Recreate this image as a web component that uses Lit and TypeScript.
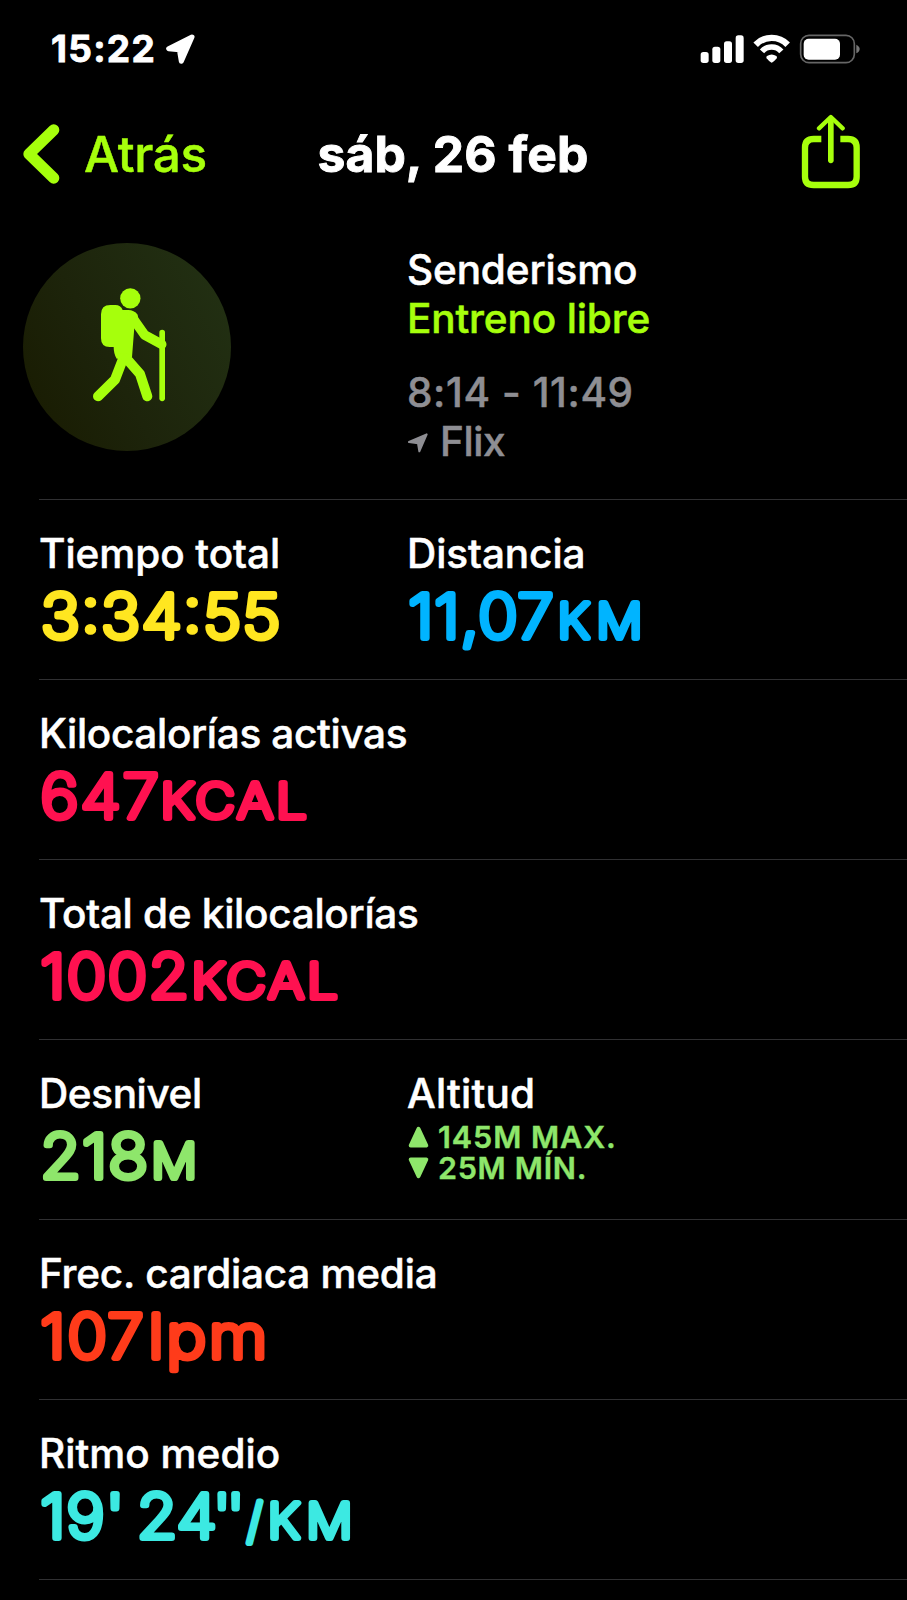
import { LitElement, html, svg, css, nothing } from "lit";
import { customElement, property } from "lit/decorators.js";

/** A run of rounded display text: text, font size, left edge, tracking, horizontal stretch. */
type Run = [string, number, number, number, number];

interface Metric {
  label: string;
  track: number;
  tone: string;
  runs?: Run[];
  range?: { up: boolean; text: string; cls: string }[];
}

const ROWS: Metric[][] = [
  [
    { label: "Tiempo total", track: -0.05, tone: "yellow", runs: [["3:34:55", 60.8, 2, 1.7, 1.07]] },
    {
      label: "Distancia", track: -0.08, tone: "blue",
      runs: [["11,07", 60.8, 1.6, 1.2, 1.07], ["KM", 47.6, 150.8, 6.5, 1.07]],
    },
  ],
  [{
    label: "Kilocalorías activas", track: -0.33, tone: "pink",
    runs: [["647", 60.8, 1.5, 2.1, 1.07], ["KCAL", 47.6, 121.8, 3, 1.13]],
  }],
  [{
    label: "Total de kilocalorías", track: -0.28, tone: "pink",
    runs: [["1002", 60.8, 1.5, 1.5, 1.07], ["KCAL", 47.6, 152.8, 3, 1.13]],
  }],
  [
    {
      label: "Desnivel", track: -0.4, tone: "green",
      runs: [["218", 60.8, 1.4, 1.5, 1.07], ["M", 47.6, 112.6, 0, 1.06]],
    },
    {
      label: "Altitud", track: 0.23, tone: "green",
      range: [
        { up: true, text: "145M MAX.", cls: "max" },
        { up: false, text: "25M MÍN.", cls: "min" },
      ],
    },
  ],
  [{
    label: "Frec. cardiaca media", track: -0.23, tone: "red",
    runs: [["107", 60.8, 1.5, 2, 1.07], ["lpm", 60.8, 109.5, 2.7, 1.1]],
  }],
  [{
    label: "Ritmo medio", track: 0.02, tone: "cyan",
    runs: [
      ["19'", 60.8, 1.5, 1.2, 1.07], ["24", 60.8, 98, 0.6, 1.07], ["''", 60.8, 174.2, -3.34, 1],
      ["/", 47.6, 208, 0, 0.95], ["KM", 47.6, 228.9, 6.5, 1.07],
    ],
  }],
];

@customElement("workout-metric")
class WorkoutMetric extends LitElement {
  @property({ attribute: false }) metric!: Metric;

  static styles = css`
    :host { display: block; }
    .label {
      font-size: 40.5px; line-height: 49px; font-weight: 500; white-space: nowrap;
      -webkit-text-stroke: 0.5px currentColor;
    }
    .value { display: block; overflow: visible; }
    .value text {
      fill: currentColor; stroke: currentColor; stroke-width: 6; stroke-linejoin: round;
      font-family: Inter, sans-serif; font-weight: 200;
    }
    .yellow { color: #ffe620; }
    .blue { color: #00b4ff; }
    .pink { color: #ff1150; }
    .green { color: #8ee66b; }
    .red { color: #ff3b1a; }
    .cyan { color: #3ce9e2; }
    .range { padding-top: 3px; }
    .line {
      display: flex; align-items: center; gap: 9px; padding-left: 1px;
      font-size: 30.5px; line-height: 31px; font-weight: 600; white-space: nowrap;
      -webkit-text-stroke: 0.4px currentColor;
    }
    .line svg { flex: none; }
    .max { letter-spacing: 0.95px; }
    .min { letter-spacing: 0.7px; }
  `;

  render() {
    const m = this.metric;
    return html`
      <div class="label" style="letter-spacing:${m.track}px">${m.label}</div>
      ${m.runs
        ? html`<svg class="value ${m.tone}" width="330" height="80">
            ${m.runs.map(([text, size, x, track, stretch]) => svg`<text
              transform="translate(${x} 60.2) scale(${stretch} 1)" font-size=${size}
              dx=${["0", ...Array(text.length - 1).fill(track)].join(" ")}>${text}</text>`)}
          </svg>`
        : nothing}
      ${m.range
        ? html`<div class="range ${m.tone}">${m.range.map((r) => html`
            <div class="line ${r.cls}">
              <svg width="21" height="22" viewBox="0 0 21 22">
                <path d=${r.up ? "M10.5 2.800L18.300 19.500H2.700Z" : "M10.500 19.200L18.300 2.500H2.700Z"} fill="currentColor"
                  stroke="currentColor" stroke-width="4" stroke-linejoin="round"/>
              </svg>
              <span>${r.text}</span>
            </div>`)}</div>`
        : nothing}
    `;
  }
}

@customElement("app-root")
class AppRoot extends LitElement {
  static styles = css`
    :host {
      display: block; height: 1600px; overflow: hidden; background: #000; color: #fff;
      font-family: Inter, "Liberation Sans", sans-serif;
    }
    svg { display: block; flex: none; }
    .status {
      display: flex; align-items: center; height: 98px; box-sizing: border-box;
      padding: 0 45px 0 51px;
    }
    .clock {
      font-size: 37px; font-weight: 700; letter-spacing: 1.3px; line-height: 44px; width: 113px;
      -webkit-text-stroke: 0.8px currentColor;
    }
    .status .system { margin-left: auto; }
    .nav {
      display: grid; grid-template-columns: 1fr auto 1fr; align-items: center;
      height: 112px; padding: 0 46px 0 22px;
    }
    .back { display: flex; align-items: center; gap: 24px; color: #a6ff0c; }
    .back span {
      font-size: 49.5px; line-height: 60px; font-weight: 500; letter-spacing: -0.35px;
      -webkit-text-stroke: 0.5px currentColor;
    }
    .title {
      font-size: 49.8px; line-height: 60px; font-weight: 700; letter-spacing: 0.05px; padding-left: 23px;
      -webkit-text-stroke: 0.9px currentColor;
    }
    .share { justify-self: end; margin-bottom: 4px; }
    .summary { display: flex; height: 289px; box-sizing: border-box; padding: 33px 0 0 23px; }
    .badge {
      width: 208px; height: 208px; border-radius: 50%;
      background: linear-gradient(62deg, #191c02 8%, #1d240b 42%, #223013 92%);
    }
    .info {
      margin-left: 176px; padding-top: 2px; font-size: 40.5px; line-height: 49px; font-weight: 500;
      white-space: nowrap; letter-spacing: -0.15px; -webkit-text-stroke: 0.5px currentColor;
    }
    .kind { color: #a6ff0c; }
    .hours { color: #8e8e93; margin-top: 25px; letter-spacing: 0.6px; }
    .place { color: #8e8e93; display: flex; align-items: center; letter-spacing: -0.43px; gap: 11px; }
    .place svg { margin-top: 3px; }
    .rows { padding-left: 39px; }
    .row {
      display: grid; grid-template-columns: 368px 1fr; height: 180px; box-sizing: border-box;
      border-top: 1px solid #303032; padding-top: 29px;
    }
    .row:last-child { height: 181px; border-bottom: 1px solid #303032; }
  `;

  render() {
    return html`
      <div class="status">
        <div class="clock">15:22</div>
        <svg width="34" height="34" viewBox="0 0 102 102">
          <path d="M84 15L14 50L46 53L52 88Z" fill="#fff" stroke="#fff" stroke-width="15" stroke-linejoin="round"/>
        </svg>
        <svg class="system" width="162" height="30" viewBox="750 100 486 90">
          <g fill="#fff">
            <rect x="752" y="154" width="24" height="33" rx="8"/>
            <rect x="787" y="138" width="24" height="49" rx="8"/>
            <rect x="822" y="122" width="24" height="65" rx="8"/>
            <rect x="857" y="104" width="24" height="83" rx="8"/>
            <path d="M965 186Q961 186 950 173Q947 169 951 166Q965 157 979 166Q983 169 980 173Q969 186 965 186Z"/>
          </g>
          <g fill="none" stroke="#fff">
            <path d="M917 132A67 67 0 0 1 1013 132" stroke-width="19"/>
            <path d="M936 152A39 39 0 0 1 994 152" stroke-width="17"/>
          </g>
          <rect x="1052" y="104" width="161" height="82" rx="25" fill="none" stroke="#666" stroke-width="5"/>
          <rect x="1061" y="114" width="109" height="63" rx="15" fill="#fff"/>
          <path d="M1219 132Q1229 137 1229 145Q1229 153 1219 158Z" fill="#777"/>
        </svg>
      </div>
      <div class="nav">
        <div class="back">
          <svg width="38" height="60" viewBox="66 373 114 180">
            <path d="M161 391L87 463L161 535" fill="none" stroke="currentColor" stroke-width="34"
              stroke-linecap="round" stroke-linejoin="round"/>
          </svg>
          <span>Atrás</span>
        </div>
        <div class="title">sáb, 26 feb</div>
        <svg class="share" width="60" height="76" viewBox="1054 341 180 228" fill="none" stroke="#a6ff0c">
          <path d="M1115 416H1092Q1066 416 1066 442V529Q1066 554 1092 554H1195Q1221 554 1221 529V442Q1221 416 1195 416H1172" stroke-width="19"/>
          <path d="M1143.5 356V480" stroke-width="17" stroke-linecap="round"/>
          <path d="M1108 384L1143.5 350L1179 384" stroke-width="13" stroke-linecap="round" stroke-linejoin="round"/>
        </svg>
      </div>
      <div class="summary">
        <div class="badge">
          <svg width="208" height="208" viewBox="69 69 624 624" fill="#a6ff0c" stroke="#a6ff0c" stroke-linejoin="round" stroke-linecap="round">
            <circle cx="391" cy="235" r="30.5" stroke="none"/>
            <path stroke="none" d="M303 283Q303 255 331 255H346Q362 255 368 270H385Q402 270 413 284L420 330L403 322L396 412L350 416Q341 402 341 381H329Q303 381 303 355Z"/>
            <path d="M396 291L434 345L485 373" fill="none" stroke-width="29"/>
            <path d="M486.500 338V535" fill="none" stroke-width="17"/>
            <path d="M370 414L345 479L294 529" fill="none" stroke-width="30"/>
            <path d="M380 416L420 462L442 529" fill="none" stroke-width="30"/>
          </svg>
        </div>
        <div class="info">
          <div>Senderismo</div>
          <div class="kind">Entreno libre</div>
          <div class="hours">8:14 - 11:49</div>
          <div class="place">
            <svg width="22" height="22" viewBox="81 607 66 66">
              <path d="M140 614L87 637L114 641L118 665Z" fill="#8e8e93" stroke="#8e8e93" stroke-width="6" stroke-linejoin="round"/>
            </svg>
            <span>Flix</span>
          </div>
        </div>
      </div>
      <div class="rows">
        ${ROWS.map((row) => html`<div class="row">
          ${row.map((m) => html`<workout-metric .metric=${m}></workout-metric>`)}
        </div>`)}
      </div>
    `;
  }
}
